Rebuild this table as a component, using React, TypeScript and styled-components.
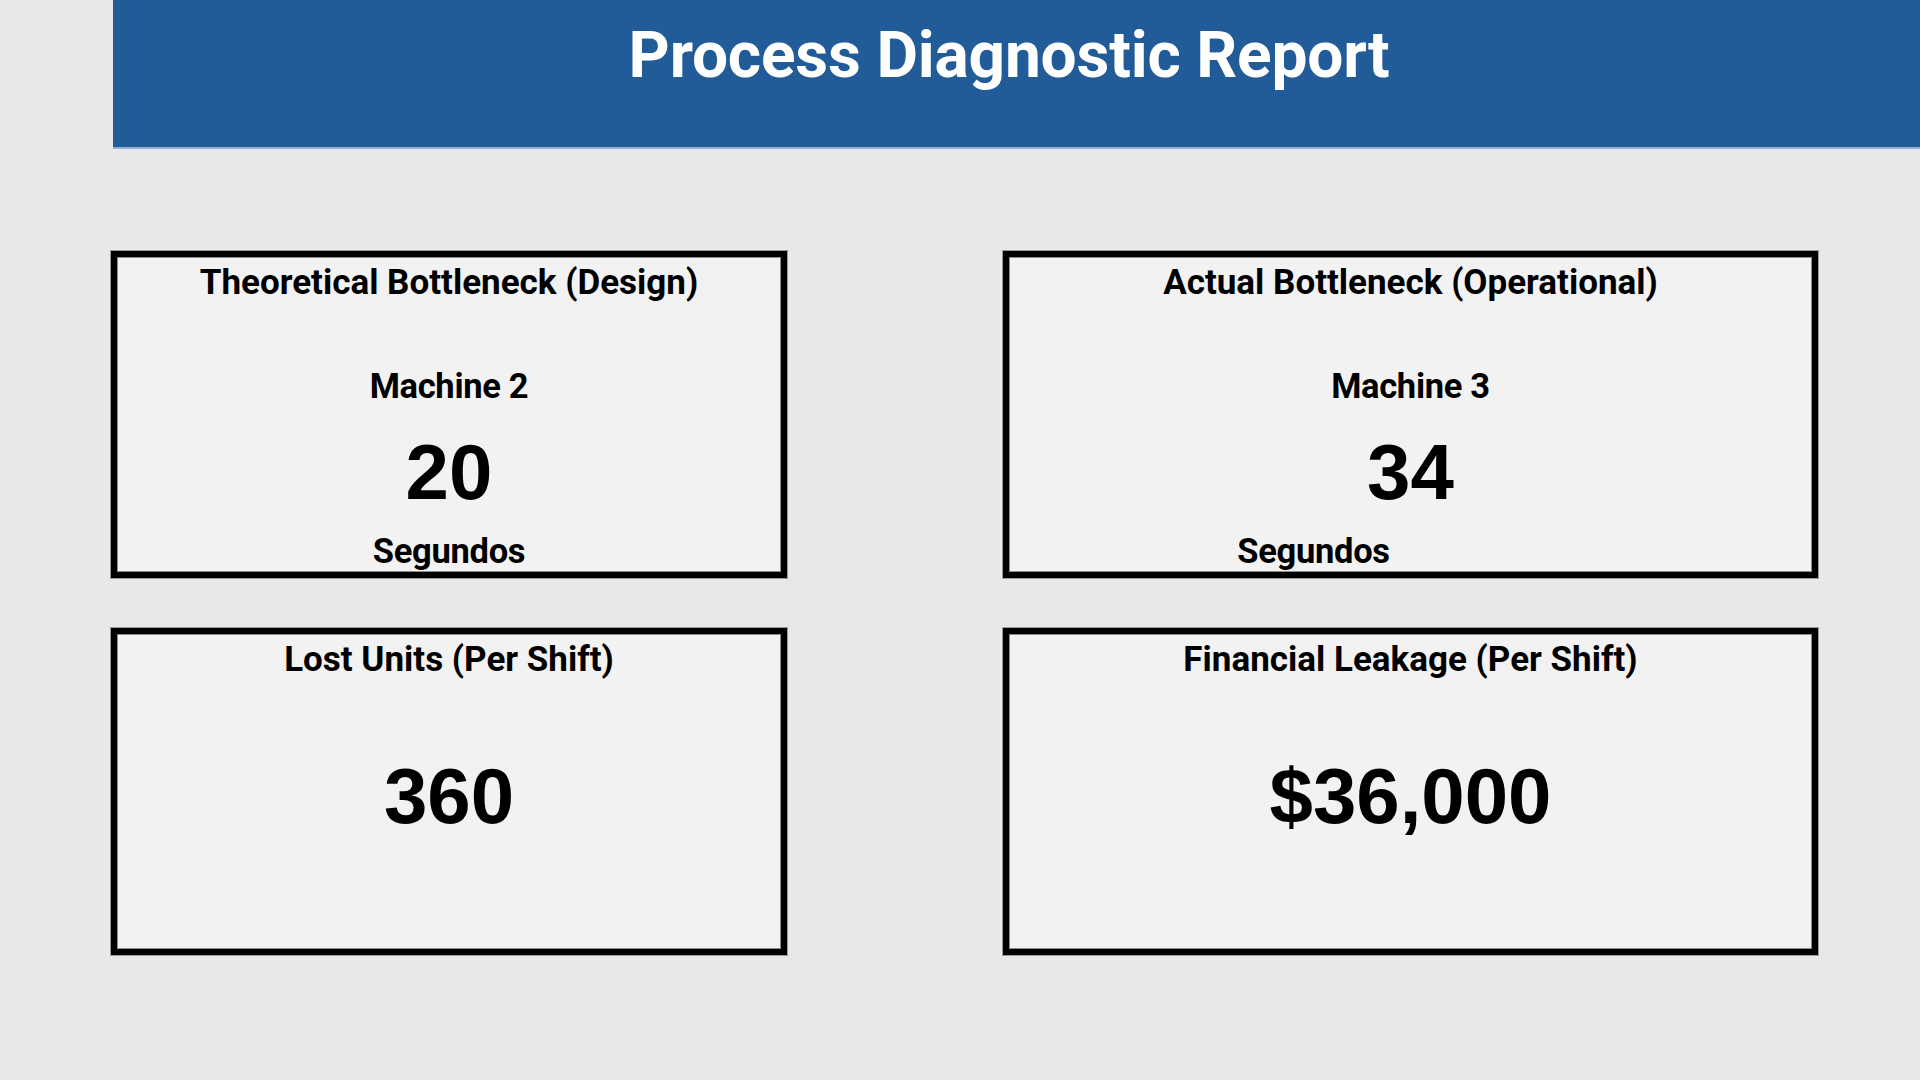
import React from "react";
import styled, { createGlobalStyle } from "styled-components";

const GlobalStyle = createGlobalStyle`
  html, body {
    margin: 0;
    padding: 0;
    background: #e8e8e8;
  }
  body {
    width: 1920px;
    height: 1080px;
    overflow: hidden;
    font-family: Roboto, "Liberation Sans", sans-serif;
    color: #000;
  }
`;

const Page = styled.div`
  display: flex;
  flex-direction: column;
  width: 1920px;
  height: 1080px;
`;

const Banner = styled.header`
  margin-left: 113px;
  height: 149px;
  background: #215b98;
  border-bottom: 2px solid #8fb0d8;
  display: flex;
  justify-content: center;
  align-items: flex-start;
  padding: 16px 15px 0 0;
  box-sizing: border-box;
`;

const Title = styled.h1`
  margin: 0;
  font-family: Roboto, "Liberation Sans", sans-serif;
  font-weight: 700;
  font-size: 64px;
  line-height: 80px;
  color: #ffffff;
  letter-spacing: -0.2px;
`;

const Grid = styled.main`
  display: grid;
  grid-template-columns: 676px 815px;
  grid-template-rows: 327px 327px;
  column-gap: 216px;
  row-gap: 50px;
  margin: 102px 0 0 111px;
`;

const Card = styled.section`
  box-sizing: border-box;
  border: 6px solid #000;
  background: #f2f2f2;
  box-shadow: inset 0 0 0 1px #8a8a8a, 0 0 0 1px #9a9a9a;
  display: flex;
  flex-direction: column;
  align-items: center;
  padding-top: 6px;
`;

const CardTitle = styled.h2`
  margin: 0;
  font-family: Roboto, "Liberation Sans", sans-serif;
  font-weight: 700;
  font-size: 35px;
  line-height: 40px;
  letter-spacing: 0;
  white-space: nowrap;
`;

const Label = styled.div<{ $mt: number; $shift?: number }>`
  margin-top: ${(p) => p.$mt}px;
  margin-right: ${(p) => (p.$shift ?? 0) * 2}px;
  font-family: Roboto, "Liberation Sans", sans-serif;
  font-weight: 700;
  font-size: 34.5px;
  line-height: 40px;
  letter-spacing: -0.3px;
  white-space: nowrap;
`;

const Value = styled.div<{ $mt: number }>`
  margin-top: ${(p) => p.$mt}px;
  font-family: "Liberation Sans", Arial, sans-serif;
  font-weight: 700;
  font-size: 78px;
  line-height: 80px;
  white-space: nowrap;
`;

type Kpi = {
  title: string;
  machine?: string;
  value: string;
  unit?: string;
  unitShift?: number;
};

const top: Kpi[] = [
  { title: "Theoretical Bottleneck (Design)", machine: "Machine 2", value: "20", unit: "Segundos" },
  { title: "Actual Bottleneck (Operational)", machine: "Machine 3", value: "34", unit: "Segundos", unitShift: 97 },
];

const bottom: Kpi[] = [
  { title: "Lost Units (Per Shift)", value: "360" },
  { title: "Financial Leakage (Per Shift)", value: "$36,000" },
];

export default function App() {
  return (
    <>
      <GlobalStyle />
      <Page>
        <Banner>
          <Title>Process Diagnostic Report</Title>
        </Banner>
        <Grid>
          {top.map((k) => (
            <Card key={k.title}>
              <CardTitle>{k.title}</CardTitle>
              <Label $mt={63}>{k.machine}</Label>
              <Value $mt={26}>{k.value}</Value>
              <Label $mt={19} $shift={k.unitShift}>
                {k.unit}
              </Label>
            </Card>
          ))}
          {bottom.map((k) => (
            <Card key={k.title}>
              <CardTitle>{k.title}</CardTitle>
              <Value $mt={76}>{k.value}</Value>
            </Card>
          ))}
        </Grid>
      </Page>
    </>
  );
}
